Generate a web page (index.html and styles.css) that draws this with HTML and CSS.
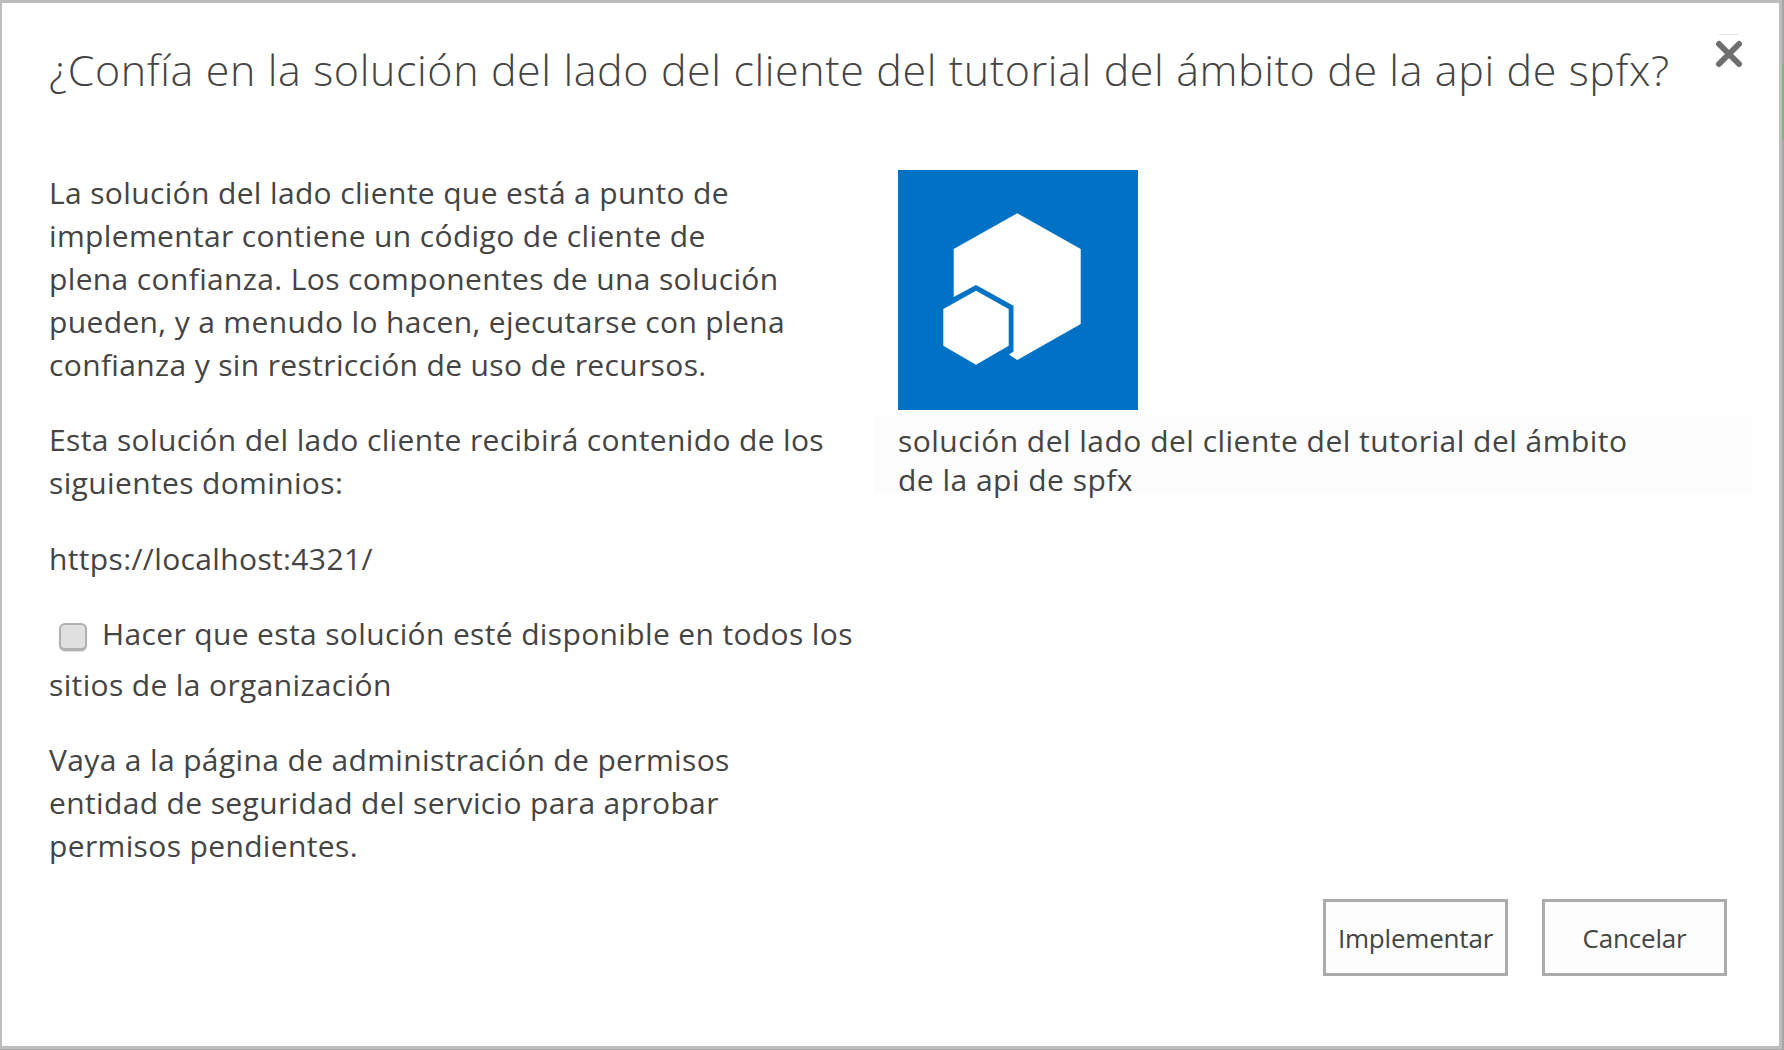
FILE: index.html
```html
<!DOCTYPE html>
<html lang="es">
<head>
    <meta charset="UTF-8">
    <meta name="viewport" content="width=device-width, initial-scale=1.0">
    <title>Implementar solución</title>
    <link rel="stylesheet" href="styles.css">
</head>
<body>
    <div class="dialog">
        <div class="dialog-header">
            <h1 class="dialog-title">¿Confía en la solución del lado del cliente del tutorial del ámbito de la api de spfx?</h1>
            <button class="close-button" aria-label="Cerrar">
                <svg width="28" height="28" viewBox="0 0 28 28">
                    <path d="M4 4 L24 24 M24 4 L4 24" stroke="#6e6e6e" stroke-width="6" stroke-linecap="round" fill="none"/>
                </svg>
            </button>
        </div>

        <div class="dialog-body">
            <div class="column-left">
                <p>La solución del lado cliente que está a punto de<br>implementar contiene un código de cliente de<br>plena confianza. Los componentes de una solución<br>pueden, y a menudo lo hacen, ejecutarse con plena<br>confianza y sin restricción de uso de recursos.</p>
                <p>Esta solución del lado cliente recibirá contenido de los<br>siguientes dominios:</p>
                <p class="domain-url">https://localhost:4321/</p>
                <label class="check-row">
                    <input type="checkbox" class="check-box">Hacer que esta solución esté disponible en todos los<br>sitios de la organización
                </label>
                <p>Vaya a la página de administración de permisos<br>entidad de seguridad del servicio para aprobar<br>permisos pendientes.</p>
            </div>
            <div class="column-right">
                <div class="app-icon">
                    <svg width="240" height="240" viewBox="0 0 240 240">
                        <path d="M55.7 79 L119.3 43.3 L182.7 79 L182.7 154 L119.3 190 L111 184.5 L115.5 181.5 L115.5 135.7 L78 115 L55.7 127 Z" fill="#fff"/>
                        <path d="M78 120.7 L110.7 139 L110.7 175.7 L78 194.7 L45.3 175.7 L45.3 139 Z" fill="#fff"/>
                    </svg>
                </div>
                <div class="app-caption">solución del lado del cliente del tutorial del ámbito<br>de la api de spfx</div>
            </div>
        </div>

        <div class="dialog-footer">
            <button class="action-button">Implementar</button>
            <button class="action-button">Cancelar</button>
        </div>
    </div>
    <div class="edge-strip"></div>
</body>
</html>
```

FILE: styles.css
```css
* {
    margin: 0;
    padding: 0;
    box-sizing: border-box;
    font-family: 'Open Sans', 'Noto Sans', sans-serif;
}

body {
    position: relative;
    width: 1784px;
    height: 1050px;
    background-color: #a6a6a6;
    overflow: hidden;
}

.dialog {
    display: flex;
    flex-direction: column;
    width: 1782px;
    height: 1049px;
    background: #fff;
    border-style: solid;
    border-color: #bdbdbd;
    border-width: 3px 3px 3px 2px;
    color: #444;
}

.edge-strip {
    position: absolute;
    top: 64px;
    right: 0;
    width: 2px;
    height: 75px;
    background-color: #8cae78;
}

.dialog-header {
    display: flex;
    justify-content: space-between;
    align-items: flex-start;
    height: 167px;
    padding: 0 35px 0 47px;
}

.dialog-title {
    margin-top: 37px;
    font-size: 43px;
    font-weight: 300;
    letter-spacing: 0.6px;
    line-height: 60px;
    white-space: nowrap;
}

.close-button {
    position: relative;
    margin-top: 37px;
    margin-right: 1px;
    background: none;
    border: none;
    line-height: 0;
    cursor: pointer;
}

.close-button svg {
    filter: blur(0.6px);
}

.close-button::before {
    content: '';
    position: absolute;
    top: -6px;
    left: 4px;
    width: 19px;
    height: 1px;
    background-color: #e6e6e6;
}

.dialog-body {
    display: flex;
    flex: 1;
    padding-left: 47px;
}

.column-left {
    width: 825px;
    padding-top: 4px;
    font-size: 30px;
    line-height: 43px;
    letter-spacing: 0.36px;
}

.column-left p {
    margin-bottom: 32px;
}

.column-left .domain-url {
    margin-top: 33px;
}

.check-row {
    display: block;
    margin-top: -4px;
    margin-bottom: 28px;
    line-height: 51px;
}

.check-box {
    appearance: none;
    width: 28px;
    height: 28px;
    margin: 0 15px 0 10px;
    vertical-align: -6px;
    background: #e0e0e0;
    border: 2px solid #b0b0b0;
    border-bottom-width: 3px;
    border-radius: 6px;
    box-shadow: 0 1px 1px #ddd;
}

.column-right {
    width: 878px;
    padding-top: 3px;
}

.app-icon {
    width: 240px;
    height: 240px;
    margin-left: 24px;
    background-color: #0072c6;
}

.app-icon svg {
    display: block;
    filter: blur(0.5px);
}

.app-caption {
    height: 76px;
    margin-top: 7px;
    padding: 4px 24px;
    background-color: #fcfcfc;
    font-size: 30px;
    line-height: 39px;
    letter-spacing: 0.48px;
}

.dialog-footer {
    display: flex;
    justify-content: flex-end;
    gap: 34px;
    height: 150px;
    padding-right: 52px;
}

.action-button {
    width: 185px;
    height: 77px;
    padding-top: 2px;
    background: #fdfdfd;
    border: 3px solid #ababab;
    color: #444;
    font-size: 26px;
    letter-spacing: -0.2px;
    cursor: pointer;
}
```
